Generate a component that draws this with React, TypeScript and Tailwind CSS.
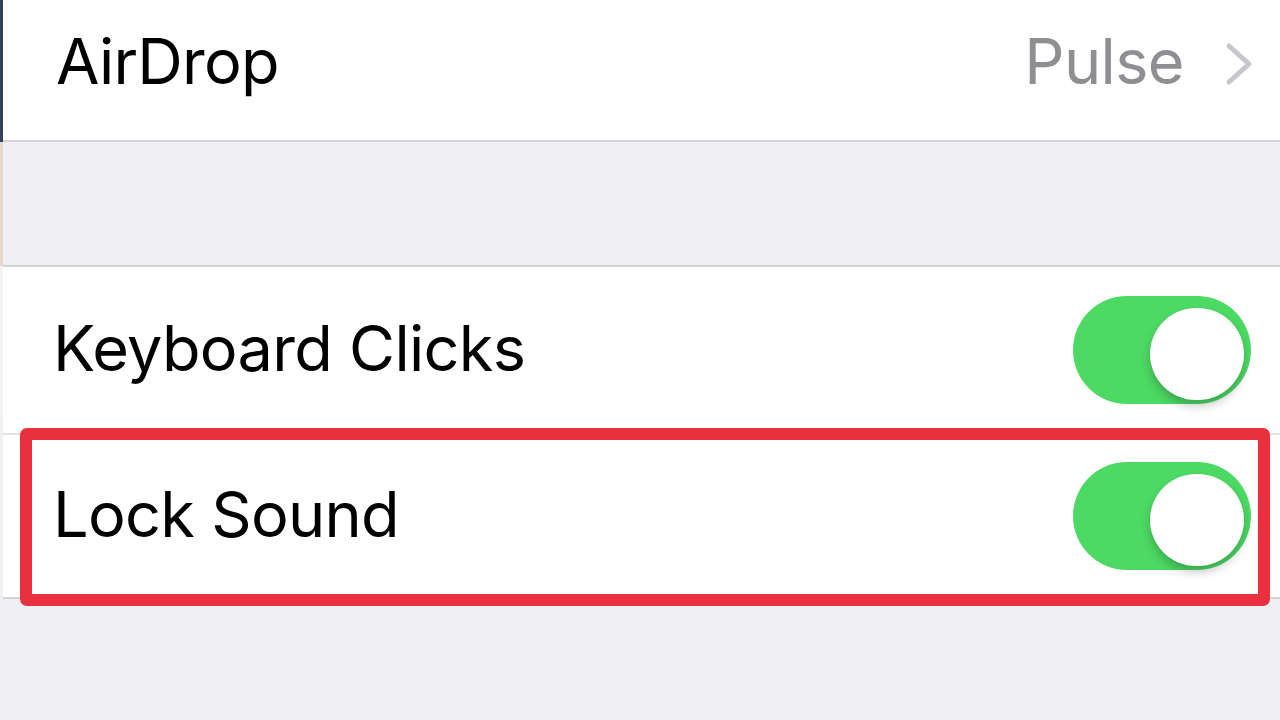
import React from 'react';

function Toggle() {
  return (
    <div className="relative w-[178px] h-[108px] rounded-full bg-[#4cd964]">
      <div className="absolute right-[7px] top-[12px] w-[94px] h-[92px] rounded-full bg-white shadow-[0_6px_10px_rgba(0,0,0,0.22)]" />
    </div>
  );
}

export default function App() {
  return (
    <div
      className="w-[1280px] h-[720px] overflow-hidden bg-[#efeff4] flex"
      style={{ fontFamily: 'Inter, "Noto Sans", sans-serif' }}
    >
      {/* left edge of the photographed frame */}
      <div className="w-[3px] flex flex-col shrink-0">
        <div className="h-[142px] bg-[#34425e]" />
        <div className="h-[124px] bg-[#e9d6c6]" />
        <div className="h-[150px] bg-[#f4f2f2]" />
        <div className="flex-1 bg-[#efeff4]" />
      </div>

      <div className="flex-1 flex flex-col">
        {/* AirDrop */}
        <div className="h-[142px] bg-white border-b-[2px] border-[#d4d4d8] flex items-center pl-[53px] pr-[26px] pb-[18px]">
          <span className="text-[63px] text-black tracking-[-0.8px]">AirDrop</span>
          <span className="ml-auto text-[63px] text-[#8e8e93] tracking-[-0.6px]">Pulse</span>
          <svg className="ml-[40px] mt-[6px]" width="30" height="44" viewBox="0 0 30 44" fill="none">
            <path d="M5 4 L25 22 L5 40" stroke="#c7c7cc" strokeWidth="5" strokeLinecap="round" strokeLinejoin="round" />
          </svg>
        </div>

        <div className="h-[123px]" />

        {/* switches */}
        <div className="bg-white border-t-[2px] border-b-[2px] border-[#d4d4d8]">
          <div className="h-[168px] flex items-center pl-[50px] pr-[29px] border-b-[2px] border-[#e2e2e6]">
            <span className="text-[63px] text-black tracking-[-0.7px] pb-[4px]">Keyboard Clicks</span>
            <div className="ml-auto">
              <Toggle />
            </div>
          </div>
          <div className="relative h-[162px] flex items-center pl-[50px] pr-[29px]">
            <span className="text-[63px] text-black tracking-[-0.7px] pb-[4px]">Lock Sound</span>
            <div className="ml-auto">
              <Toggle />
            </div>
            <div className="absolute left-[17px] right-[10px] top-[-7px] bottom-[-9px] border-[12px] border-[#e8303f] rounded-[7px]" />
          </div>
        </div>
      </div>
    </div>
  );
}
